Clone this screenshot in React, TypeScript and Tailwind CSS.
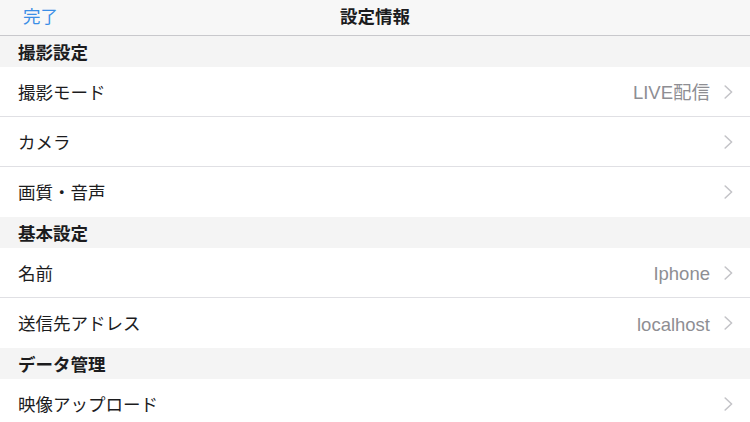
type Row = { label: string; value?: string };
type Section = { title: string; rows: Row[] };

const sections: Section[] = [
  {
    title: '撮影設定',
    rows: [{ label: '撮影モード', value: 'LIVE配信' }, { label: 'カメラ' }, { label: '画質・音声' }],
  },
  {
    title: '基本設定',
    rows: [{ label: '名前', value: 'Iphone' }, { label: '送信先アドレス', value: 'localhost' }],
  },
  {
    title: 'データ管理',
    rows: [{ label: '映像アップロード' }],
  },
];

function Chevron() {
  return (
    <svg width="9" height="14" viewBox="0 0 9 14" fill="none" className="shrink-0">
      <path d="M1.2 1 L7.6 7 L1.2 13" stroke="#c4c4c8" strokeWidth="1.6" strokeLinecap="round" strokeLinejoin="round" />
    </svg>
  );
}

export default function App() {
  return (
    <div
      className="w-[750px] h-[422px] overflow-hidden bg-white text-[#1c1c1e]"
      style={{ fontFamily: '"Liberation Sans", "Noto Sans CJK JP", sans-serif' }}
    >
      <div className="h-[36px] bg-[#f7f7f7] border-b border-[#c8c8cc] flex items-center relative">
        <button className="absolute left-[23px] text-[17.5px] text-[#3a8ee6] leading-none">完了</button>
        <h1 className="flex-1 text-center text-[17.5px] font-bold leading-none">設定情報</h1>
      </div>

      {sections.map(section => (
        <div key={section.title}>
          <div className="h-[31px] bg-[#f4f4f4] flex items-center pl-[18px] pt-[3px] text-[17.5px] font-bold">
            {section.title}
          </div>
          {section.rows.map((row, i) => (
            <div
              key={row.label}
              className={`h-[50px] flex items-center pl-[18px] pr-[17px] ${
                i < section.rows.length - 1 ? 'border-b border-[#e0e0e4]' : ''
              }`}
            >
              <span className="flex-1 text-[17.5px] pt-[3px]">{row.label}</span>
              {row.value && <span className="text-[18.5px] text-[#8e8e93] mr-[14px] pt-[3px]">{row.value}</span>}
              <Chevron />
            </div>
          ))}
        </div>
      ))}
    </div>
  );
}
